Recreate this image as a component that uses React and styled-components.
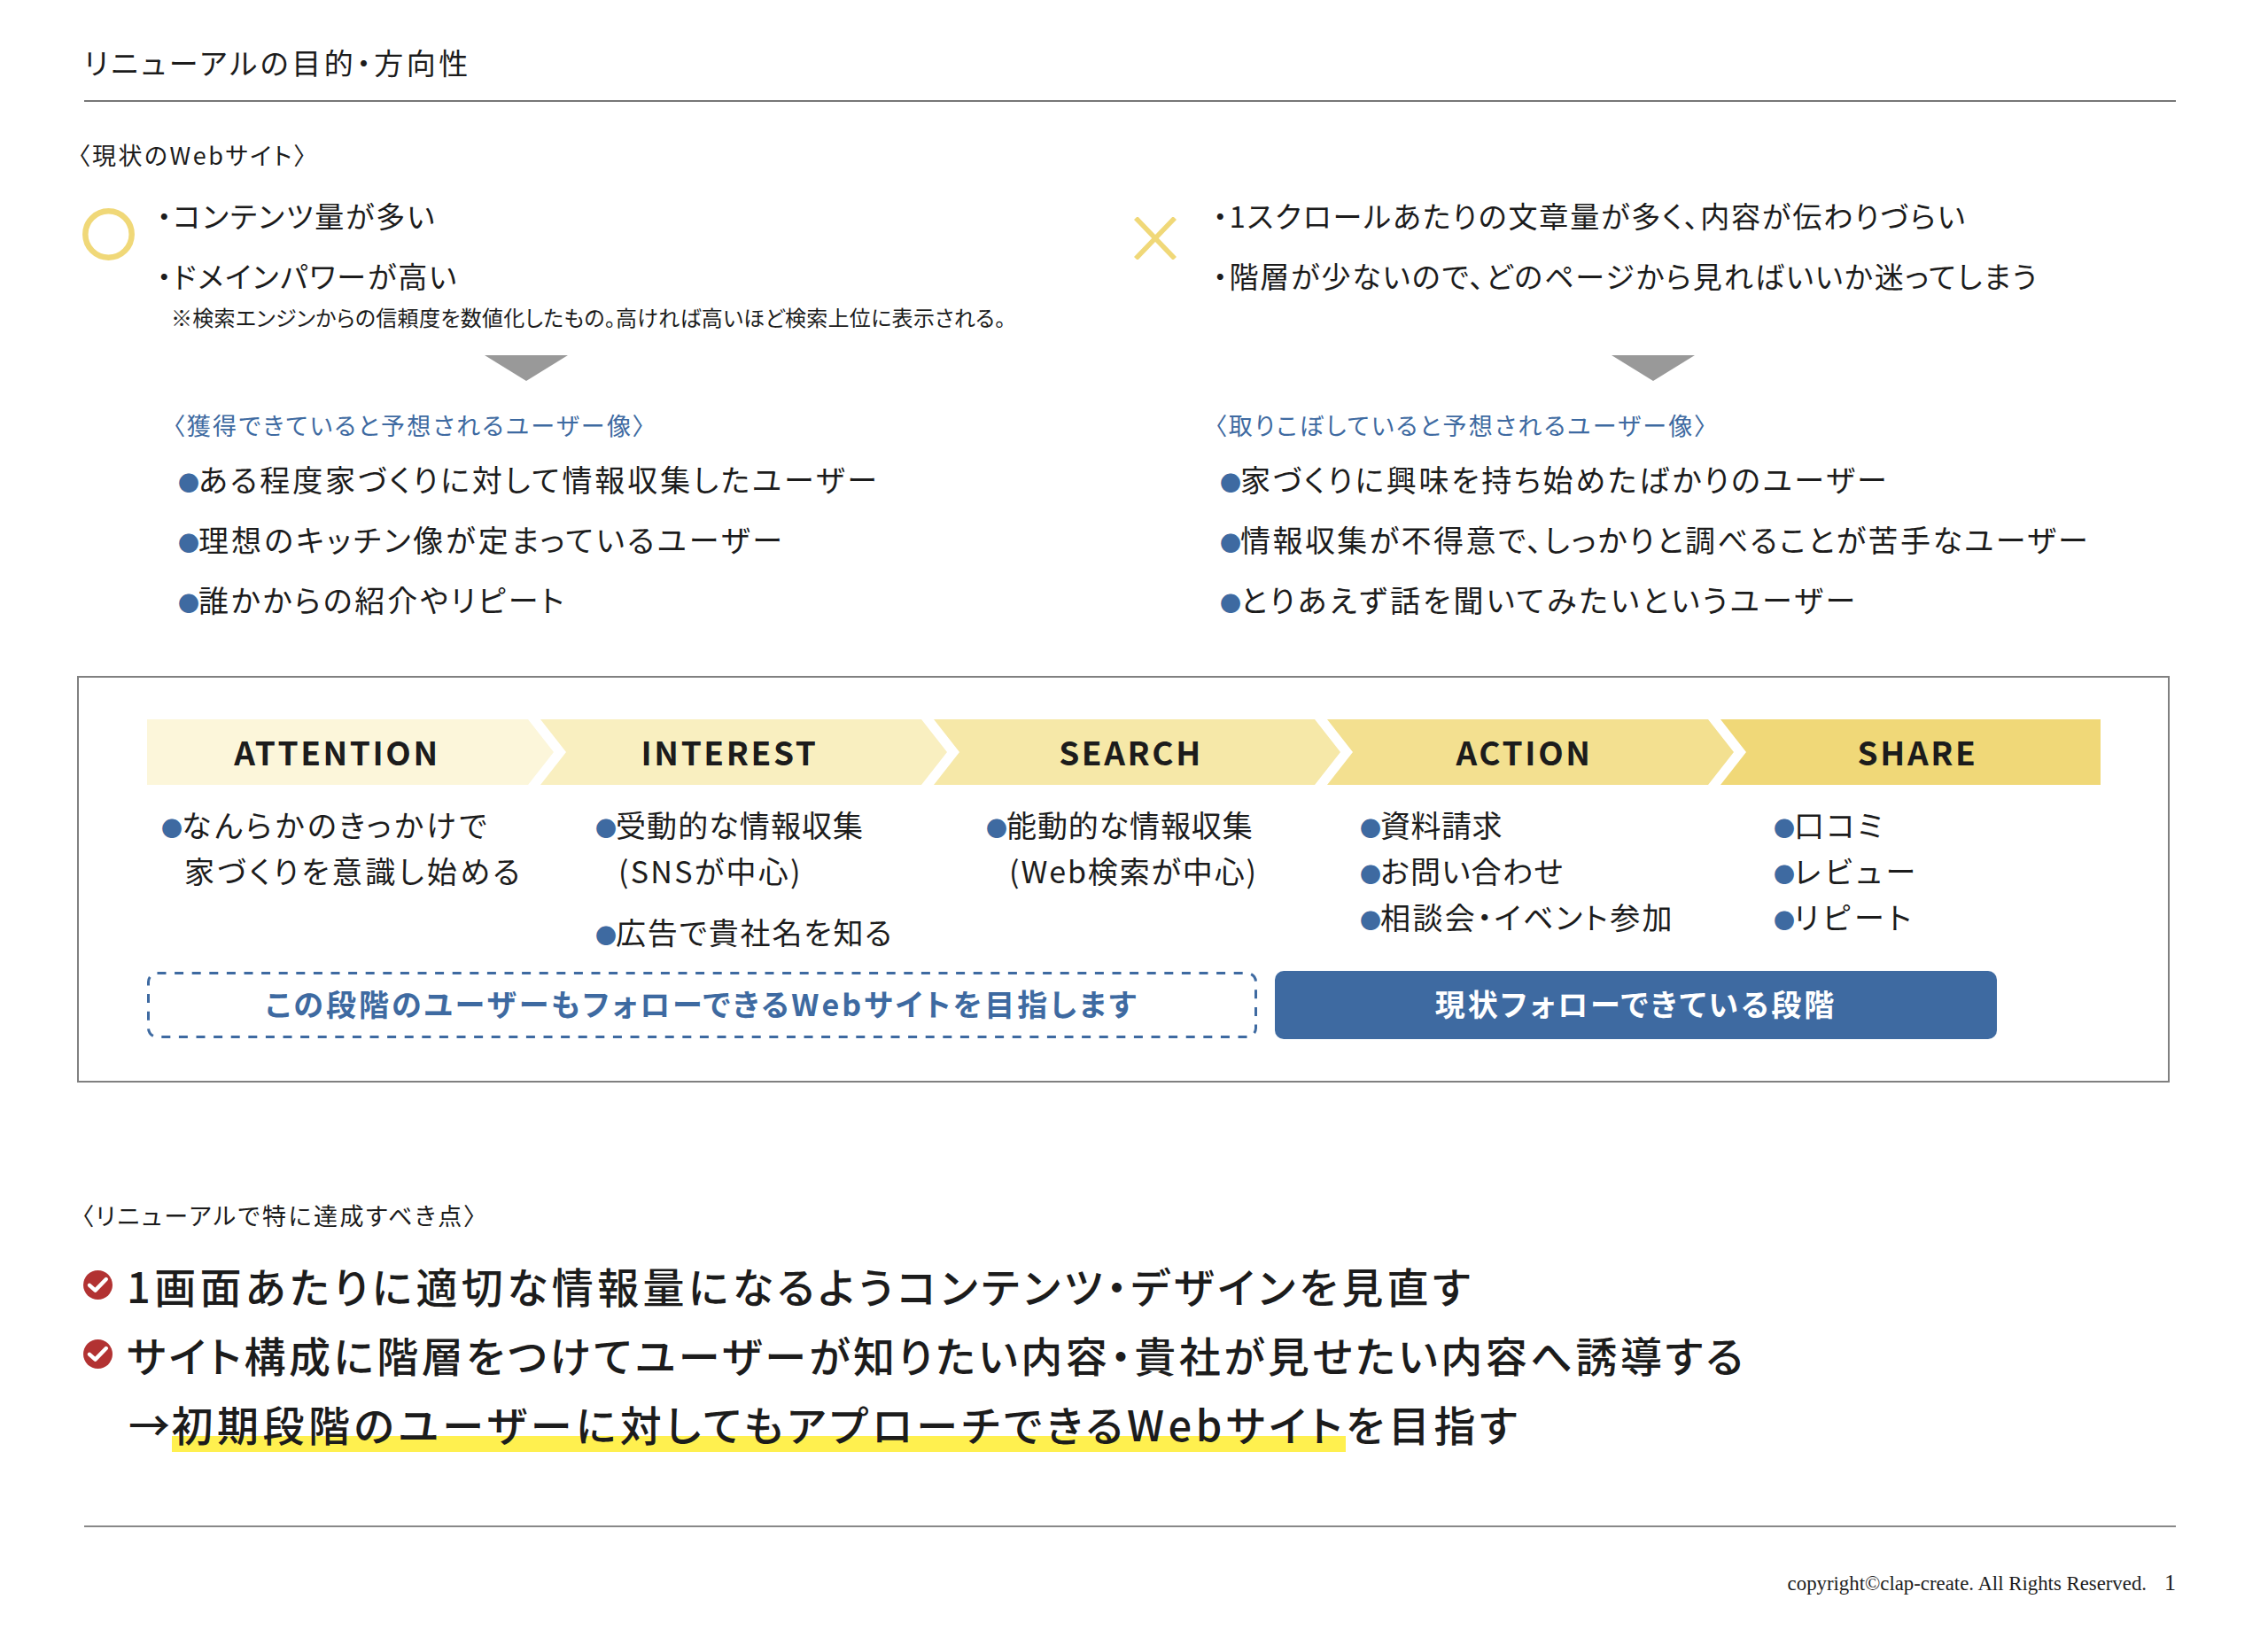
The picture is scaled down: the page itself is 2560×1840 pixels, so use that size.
import React from "react";
import styled, { createGlobalStyle } from "styled-components";

const BLUE = "#3e6aa1";
const INK = "#1c1c1c";

const Global = createGlobalStyle`
  html, body { margin: 0; padding: 0; background: #fff; }
  body {
    font-family: "Noto Sans CJK JP", "Noto Sans", sans-serif;
    font-feature-settings: "palt";
    color: ${INK};
  }
`;

const Page = styled.div`
  width: 2560px;
  height: 1840px;
  overflow: hidden;
  background: #fff;
  padding-top: 45px;
  box-sizing: border-box;
`;

const Header = styled.header`
  margin: 0 104px 0 95px;
  border-bottom: 2px solid #777;
  padding-bottom: 18px;
`;
const Title = styled.h1`
  margin: 0;
  font-size: 33px;
  line-height: 50px;
  font-weight: 400;
  letter-spacing: 3.5px;
`;

const SectionLabel = styled.p`
  margin: ${(p) => p.$top}px 0 0 ${(p) => p.$left}px;
  font-size: 27px;
  line-height: 40px;
  letter-spacing: 2.5px;
`;

const Compare = styled.section`
  display: grid;
  grid-template-columns: 1192px 1fr;
  margin: 16px 0 0 88px;
`;
const Column = styled.div`
  display: flex;
`;
const IconCell = styled.div`
  flex: 0 0 92px;
  padding: ${(p) => p.$top}px 0 0 ${(p) => p.$left}px;
  box-sizing: border-box;
`;
const Content = styled.div`
  flex: 1;
  margin-top: -2px;
`;
const TopBlock = styled.div`
  height: 192px;
  margin-left: -3px;
`;
const Point = styled.p`
  margin: 0;
  font-size: 33px;
  line-height: 68px;
  letter-spacing: 1.9px;
`;
const Note = styled.p`
  margin: -4px 0 0 16px;
  font-size: 24px;
  line-height: 34px;
  letter-spacing: 0.3px;
`;
const Arrow = styled.div`
  width: 94px;
  height: 29px;
  margin-left: ${(p) => p.$left}px;
  background: #999;
  clip-path: polygon(0 0, 100% 0, 50% 100%);
`;
const Lower = styled.div`
  padding-left: ${(p) => p.$indent}px;
`;
const BlueHeading = styled.p`
  margin: 30px 0 7px -3px;
  font-size: 27px;
  line-height: 40px;
  letter-spacing: 2.3px;
  color: ${BLUE};
`;
const Audience = styled.p`
  margin: 0;
  font-size: 34px;
  line-height: 68px;
  letter-spacing: ${(p) => p.$ls}px;
  white-space: nowrap;
`;
const Dot = styled.span`
  display: inline-block;
  width: ${(p) => p.$w || 23}px;
  margin-left: ${(p) => p.$ml || 0}px;
  font-size: 24px;
  line-height: 1;
  letter-spacing: 0;
  color: ${BLUE};
  vertical-align: 1px;
`;

const FlowBox = styled.section`
  width: 2362px;
  height: 459px;
  margin: 52px 0 0 87px;
  padding: 47px 0 0 77px;
  border: 2px solid #808080;
  box-sizing: border-box;
`;
const Steps = styled.div`
  display: flex;
  width: 2205px;
`;
const Step = styled.div`
  flex: 0 0 ${(p) => (p.$last ? 429 : 459)}px;
  height: 74px;
  margin-left: ${(p) => (p.$first ? 0 : -15)}px;
  background: ${(p) => p.$bg};
  display: flex;
  align-items: center;
  justify-content: center;
  padding: 0 ${(p) => (p.$last ? 0 : 30) + p.$shift * 2}px 3px ${(p) => (p.$first ? 0 : 30)}px;
  box-sizing: border-box;
  font-size: 37px;
  font-weight: 600;
  letter-spacing: 2.6px;
  clip-path: ${(p) =>
    p.$first
      ? "polygon(0 0, 430px 0, 100% 50%, 430px 100%, 0 100%)"
      : p.$last
      ? "polygon(0 0, 100% 0, 100% 100%, 0 100%, 29px 50%)"
      : "polygon(0 0, 430px 0, 100% 50%, 430px 100%, 0 100%, 29px 50%)"};
`;
const Columns = styled.div`
  display: grid;
  grid-template-columns: 490px 441px 422px 467px 1fr;
  height: 191px;
  margin: 19px 0 0 16px;
`;
const Line = styled.div`
  font-size: 34px;
  line-height: 52px;
  letter-spacing: ${(p) => p.$ls}px;
  white-space: nowrap;
  margin-top: ${(p) => p.$top || 0}px;
  padding-left: ${(p) => p.$indent || 0}px;
`;
const Banners = styled.div`
  display: flex;
  align-items: center;
  gap: 20px;
`;
const Banner = styled.div`
  display: flex;
  align-items: center;
  justify-content: center;
  box-sizing: border-box;
  padding-bottom: 4px;
  font-size: 34px;
  font-weight: 700;
  letter-spacing: 3px;
`;
const DashedBanner = styled(Banner)`
  position: relative;
  width: 1253px;
  height: 75px;
  color: ${BLUE};
`;
const DashOutline = styled.svg`
  position: absolute;
  inset: 0;
  width: 100%;
  height: 100%;
`;
const SolidBanner = styled(Banner)`
  width: 815px;
  height: 77px;
  border-radius: 10px;
  background: ${BLUE};
  color: #fff;
`;

const Goals = styled.section`
  margin: 19px 0 0 94px;
`;
const Goal = styled.div`
  display: flex;
  align-items: center;
  gap: 16px;
  height: 78px;
  font-size: 47px;
  font-weight: 500;
  letter-spacing: ${(p) => p.$ls}px;
  white-space: nowrap;
  padding-left: ${(p) => p.$indent || 0}px;
`;
const Mark = styled.mark`
  margin-left: -3px;
  color: inherit;
  background: linear-gradient(#fff04f, #fff04f) no-repeat 0 calc(100% - 2px) / 100% 18px;
`;

const Footer = styled.footer`
  margin: ${(p) => p.$top}px 104px 0 95px;
  border-top: 2px solid #888;
`;
const FooterRow = styled.div`
  display: flex;
  justify-content: flex-end;
  align-items: center;
  gap: 20px;
  margin-top: 48px;
  font-family: "Liberation Serif", serif;
  font-feature-settings: normal;
`;
const Copyright = styled.span`
  font-size: 22.8px;
  line-height: 30px;
`;
const PageNumber = styled.span`
  font-size: 26px;
  line-height: 30px;
  margin-bottom: 2px;
`;

const Circle = () => (
  <svg width="59" height="59" viewBox="0 0 59 59" aria-hidden="true" style={{ display: "block" }}>
    <circle cx="29.5" cy="29.5" r="26.2" fill="none" stroke="#f0d878" strokeWidth="6.5" />
  </svg>
);
const Cross = () => (
  <svg width="48" height="48" viewBox="0 0 48 48" aria-hidden="true" style={{ display: "block" }}>
    <path d="M2 1 L46 47 M46 1 L2 47" fill="none" stroke="#f0d878" strokeWidth="5.5" />
  </svg>
);
const Check = () => (
  <svg width="33" height="33" viewBox="0 0 33 33" aria-hidden="true" style={{ display: "block", flex: "none" }}>
    <circle cx="16.5" cy="16.5" r="16.5" fill="#b23232" />
    <path d="M7 16.8 L13.5 22.6 L25.8 10" fill="none" stroke="#fff" strokeWidth="4.4" strokeLinecap="round" strokeLinejoin="round" />
  </svg>
);

const steps = [
  ["ATTENTION", "#fcf6da", 0],
  ["INTEREST", "#f9efc0", 16],
  ["SEARCH", "#f6e8a8", 7],
  ["ACTION", "#f3e090", 7],
  ["SHARE", "#f0d878", 7],
];

export default function App() {
  return (
    <Page>
      <Global />
      <Header>
        <Title>リニューアルの目的・方向性</Title>
      </Header>

      <SectionLabel $top={40} $left={88}>〈現状のWebサイト〉</SectionLabel>

      <Compare>
        <Column>
          <IconCell $top={24} $left={5}><Circle /></IconCell>
          <Content>
            <TopBlock>
              <Point>・コンテンツ量が多い</Point>
              <Point>・ドメインパワーが高い</Point>
              <Note>※検索エンジンからの信頼度を数値化したもの。高ければ高いほど検索上位に表示される。</Note>
            </TopBlock>
            <Arrow $left={367} />
            <Lower $indent={18}>
              <BlueHeading>〈獲得できていると予想されるユーザー像〉</BlueHeading>
              <Audience $ls={2.9}><Dot $ml={3} $w={23}>●</Dot>ある程度家づくりに対して情報収集したユーザー</Audience>
              <Audience $ls={3.1}><Dot $ml={3} $w={23}>●</Dot>理想のキッチン像が定まっているユーザー</Audience>
              <Audience $ls={2.85}><Dot $ml={3} $w={23}>●</Dot>誰かからの紹介やリピート</Audience>
            </Lower>
          </Content>
        </Column>
        <Column>
          <IconCell $top={34} $left={0}><Cross /></IconCell>
          <Content>
            <TopBlock>
              <Point>・1スクロールあたりの文章量が多く、内容が伝わりづらい</Point>
              <Point>・階層が少ないので、どのページから見ればいいか迷ってしまう</Point>
            </TopBlock>
            <Arrow $left={447} />
            <Lower $indent={2}>
              <BlueHeading>〈取りこぼしていると予想されるユーザー像〉</BlueHeading>
              <Audience $ls={2.7}><Dot $ml={3} $w={23}>●</Dot>家づくりに興味を持ち始めたばかりのユーザー</Audience>
              <Audience $ls={2.45}><Dot $ml={3} $w={23}>●</Dot>情報収集が不得意で、しっかりと調べることが苦手なユーザー</Audience>
              <Audience $ls={3.1}><Dot $ml={3} $w={23}>●</Dot>とりあえず話を聞いてみたいというユーザー</Audience>
            </Lower>
          </Content>
        </Column>
      </Compare>

      <FlowBox>
        <Steps>
          {steps.map(([label, bg, shift], i) => (
            <Step key={label} $bg={bg} $shift={shift} $first={i === 0} $last={i === steps.length - 1}>{label}</Step>
          ))}
        </Steps>
        <Columns>
          <div>
            <Line $ls={3.6}><Dot>●</Dot>なんらかのきっかけで</Line>
            <Line $ls={3.4} $indent={26}>家づくりを意識し始める</Line>
          </div>
          <div>
            <Line $ls={1.1}><Dot>●</Dot>受動的な情報収集</Line>
            <Line $ls={2.3} $indent={26}>(SNSが中心)</Line>
            <Line $ls={1.8} $top={17}><Dot>●</Dot>広告で貴社名を知る</Line>
          </div>
          <div>
            <Line $ls={0.9}><Dot>●</Dot>能動的な情報収集</Line>
            <Line $ls={1.9} $indent={26}>(Web検索が中心)</Line>
          </div>
          <div>
            <Line $ls={0.5}><Dot>●</Dot>資料請求</Line>
            <Line $ls={1.3}><Dot>●</Dot>お問い合わせ</Line>
            <Line $ls={2.4}><Dot>●</Dot>相談会・イベント参加</Line>
          </div>
          <div>
            <Line $ls={2.8}><Dot>●</Dot>口コミ</Line>
            <Line $ls={4.6}><Dot>●</Dot>レビュー</Line>
            <Line $ls={4.4}><Dot>●</Dot>リピート</Line>
          </div>
        </Columns>
        <Banners>
          <DashedBanner>
            <DashOutline aria-hidden="true">
              <rect x="1.5" y="1.5" width="1250" height="72" rx="10" fill="none" stroke={BLUE} strokeWidth="3" strokeDasharray="10 9.6" />
            </DashOutline>
            この段階のユーザーもフォローできるWebサイトを目指します
          </DashedBanner>
          <SolidBanner>現状フォローできている段階</SolidBanner>
        </Banners>
      </FlowBox>

      <SectionLabel $top={130} $left={92}>〈リニューアルで特に達成すべき点〉</SectionLabel>

      <Goals>
        <Goal $ls={4.4}><Check />1画面あたりに適切な情報量になるようコンテンツ・デザインを見直す</Goal>
        <Goal $ls={3.5}><Check />サイト構成に階層をつけてユーザーが知りたい内容・貴社が見せたい内容へ誘導する</Goal>
        <Goal $ls={4.5} $indent={51}><span>→<Mark>初期段階のユーザーに対してもアプローチできるWebサイト</Mark>を目指す</span></Goal>
      </Goals>

      <Footer $top={77}>
        <FooterRow>
          <Copyright>copyright©clap-create. All Rights Reserved.</Copyright>
          <PageNumber>1</PageNumber>
        </FooterRow>
      </Footer>
    </Page>
  );
}
